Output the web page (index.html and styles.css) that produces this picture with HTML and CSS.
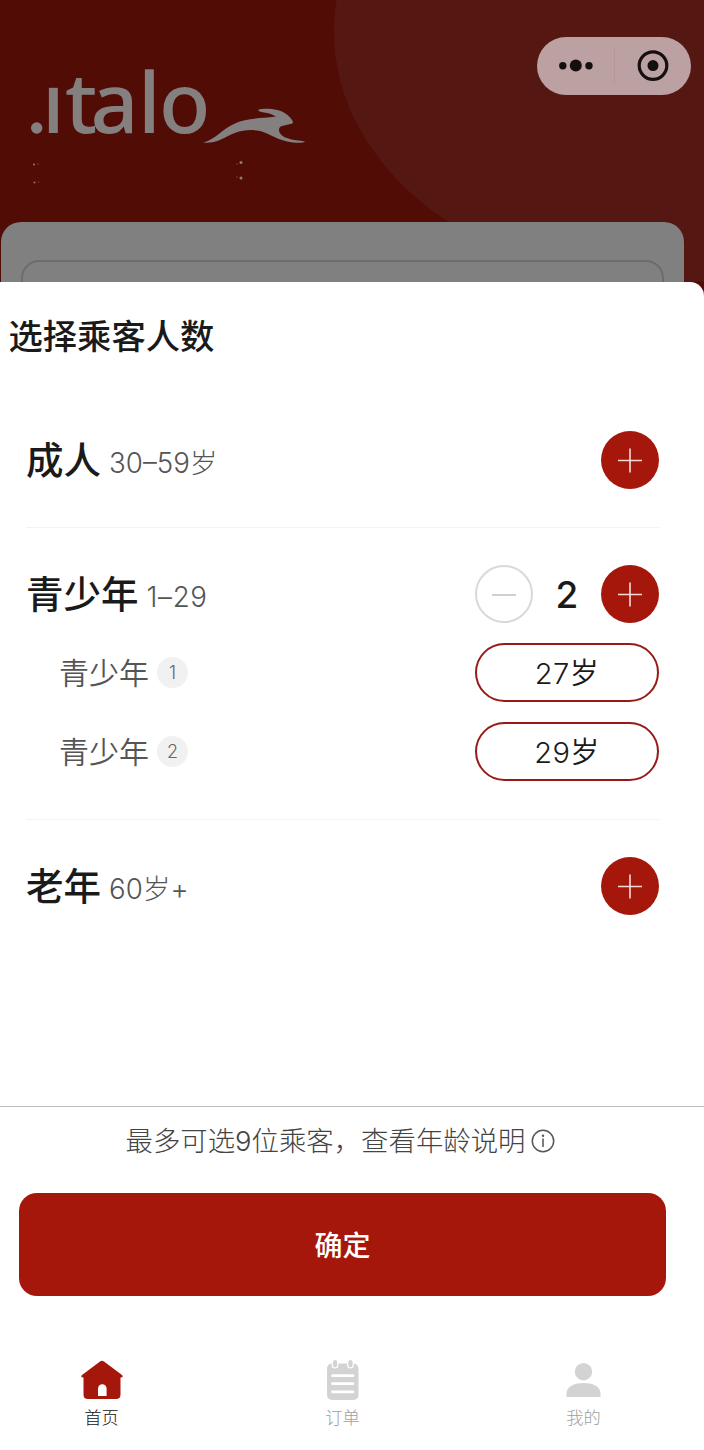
FILE: index.html
```html
<!DOCTYPE html>
<html lang="zh-CN">
<head>
<meta charset="utf-8">
<title>选择乘客人数</title>
<link rel="stylesheet" href="styles.css">
</head>
<body>
<header class="hero">
  <svg class="hero-art" viewBox="0 0 704 300" aria-hidden="true">
    <ellipse cx="664" cy="32" rx="330" ry="251" fill="#551712"/>
    <circle cx="36.700" cy="128" r="5.700" fill="#858080"/>
    <text class="wordmark" x="42 65 90.500 138 159" y="133">ıtalo</text>
    <path fill="#858080" d="M203.500 142.500C216 139 222 129 235 123.500C246 118 260 118.500 276 116.500C272 114 268 113 264 112.500C260 112 257.500 111 258.500 109.800C262 108.500 271 108.500 277 110C285 111.500 291 117 293 122C293 125 285 124 280 127C277 131 281 136 287 138C293 140.500 299 140 305 141.500C304 143.500 294 143 287 141.500C275 139 268 132 257 130.500C247 129 237 131 228 136C219 141 212 143.500 203.500 142.500Z"/>
    <g fill="#907b70"><circle cx="34" cy="164.500" r="1"/><circle cx="34.500" cy="182.500" r="1"/><circle cx="241" cy="162.500" r="1.500"/><circle cx="241" cy="178" r="1.500"/></g>
    <g fill="#6c2a22"><circle cx="38" cy="164" r="1"/><circle cx="38.500" cy="182" r="1"/><circle cx="237" cy="164" r="1"/><circle cx="237" cy="177" r="1"/></g>
  </svg>
  <div class="capsule">
    <svg width="154" height="58" viewBox="0 0 154 58"><g fill="#15100f"><circle cx="25.800" cy="28.800" r="3.700"/><circle cx="38.800" cy="28.500" r="6"/><circle cx="52" cy="28.800" r="3.700"/><circle cx="116" cy="28.600" r="5.500"/></g><circle cx="116" cy="28.600" r="13.800" fill="none" stroke="#15100f" stroke-width="3.200"/><path d="M77.500 11v36" stroke="#b39898"/></svg>
  </div>
  <div class="search-card"><div class="search-field"></div></div>
</header>

<main class="sheet">
  <h1 class="title">选择乘客人数</h1>
  <section class="group group-adult">
    <div class="row">
      <h2 class="name">成人</h2><span class="range">30–59岁</span>
      <div class="stepper"><button class="round plus"><svg viewBox="0 0 58 58"><path d="M29 17.500v24M17 29.500h24"/></svg></button></div>
    </div>
  </section>
  <section class="group group-youth">
    <div class="row">
      <h2 class="name">青少年</h2><span class="range range-wide">1–29</span>
      <div class="stepper">
        <button class="round minus"><svg viewBox="0 0 58 58"><path d="M17 30h24"/></svg></button>
        <span class="count">2</span>
        <button class="round plus"><svg viewBox="0 0 58 58"><path d="M29 17.500v24M17 29.500h24"/></svg></button>
      </div>
    </div>
    <div class="person"><span class="person-name">青少年</span><span class="badge">1</span><button class="age">27岁</button></div>
    <div class="person"><span class="person-name">青少年</span><span class="badge">2</span><button class="age">29岁</button></div>
  </section>
  <section class="group group-senior">
    <div class="row">
      <h2 class="name">老年</h2><span class="range">60岁+</span>
      <div class="stepper"><button class="round plus"><svg viewBox="0 0 58 58"><path d="M29 17.500v24M17 29.500h24"/></svg></button></div>
    </div>
  </section>
  <footer class="footer">
    <p class="hint"><span>最多可选9位乘客，查看年龄说明</span>
      <svg width="24" height="24" viewBox="0 0 24 24"><circle cx="12" cy="12" r="10.700" fill="none" stroke="#555" stroke-width="1.500"/><path d="M12 9.500v8.500" stroke="#666" stroke-width="1.700"/><circle cx="12" cy="6.700" r="1.200" fill="#555"/></svg>
    </p>
    <button class="confirm">确定</button>
  </footer>
</main>

<nav class="tabs">
  <a class="tab active">
    <svg width="42" height="40" viewBox="0 0 42 40"><path fill="#a6170b" d="M19 1.500Q21 0 23 1.500L41 15Q43 17.500 39.500 17.500V34.500Q39.500 39 35 39H7Q2.500 39 2.500 34.500V17.500Q-1 17.500 1 15Z"/><path fill="#fff" d="M17 36V28.500a4.300 4.300 0 0 1 8.600 0V36Z"/></svg>
    <span>首页</span>
  </a>
  <a class="tab">
    <svg width="32" height="40" viewBox="0 0 32 40"><rect y="3.500" width="31.500" height="36.500" rx="5" fill="#d3d3d3"/><g fill="#d3d3d3" stroke="#fff" stroke-width="1.200"><rect x="5.300" y="-.5" width="5.500" height="8.500" rx="2.700"/><rect x="20.700" y="-.5" width="5.500" height="8.500" rx="2.700"/></g><path d="M5.500 15.700h20.500M5.500 23.700h20.500M5.500 31.800h20.500" stroke="#fff" stroke-width="2.800" stroke-linecap="round"/></svg>
    <span>订单</span>
  </a>
  <a class="tab">
    <svg width="35" height="40" viewBox="0 0 35 40"><circle cx="17.500" cy="11.700" r="8.700" fill="#d3d3d3"/><path fill="#d3d3d3" d="M.5 37V33C1 26 9 23 17.500 23S34 26 34.500 33V37Z"/></svg>
    <span>我的</span>
  </a>
</nav>
</body>
</html>
```
FILE: styles.css
```css
* { box-sizing: border-box; }
body {
  margin: 0;
  width: 704px;
  height: 1450px;
  overflow: hidden;
  background: #fff;
  color: #1a1a1a;
  font-family: Inter, "Noto Sans CJK SC", sans-serif;
}
button { border: 0; padding: 0; font: inherit; color: inherit; }
svg { display: block; flex: none; }

.hero {
  position: relative;
  height: 300px;
  padding-top: 37px;
  background: #520c06;
  display: flex;
  flex-direction: column;
  overflow: hidden;
}
.hero-art { position: absolute; left: 0; top: 0; width: 704px; height: 300px; }
.wordmark { font: 500 84px "Noto Sans", "Open Sans", sans-serif; fill: #858080; }
.capsule {
  position: relative;
  align-self: flex-end;
  width: 154px;
  height: 58px;
  margin-right: 13px;
  border-radius: 29px;
  background: #bba1a1;
}
.search-card {
  position: relative;
  width: 683px;
  height: 100px;
  margin: 127px 0 0 1px;
  padding: 38px 20px 0 19.500px;
  border-radius: 20px 20px 0 0;
  background: #808080;
  flex: none;
}
.search-field { height: 60px; border: 2px solid #6c6c6c; border-radius: 18px; }

.sheet {
  position: relative;
  height: 1046px;
  margin-top: -18px;
  padding-top: 31px;
  border-radius: 0 14px 0 0;
  background: #fff;
}
.title { margin: 0 0 0 8.500px; font-size: 34.300px; line-height: 48px; font-weight: 500; }
.group { margin: 0 45px 0 26px; border-bottom: 1px solid #f3f3f3; }
.group-adult { padding-top: 70px; height: 167px; }
.group-youth { padding-top: 37px; height: 292px; }
.group-senior { padding-top: 37px; height: 286px; border: 0; }
.row { display: flex; align-items: center; height: 58px; }
.name { margin: 1px 0 0; font-size: 37.500px; line-height: 54px; font-weight: 500; }
.range { margin: 5px 0 0 8px; font-size: 27.700px; line-height: 40px; font-weight: 300; color: #555; }
.range-wide { letter-spacing: .7px; }
.stepper { margin-left: auto; display: flex; align-items: center; }
.round { width: 58px; height: 58px; border-radius: 50%; background: none; }
.round svg { width: 58px; height: 58px; fill: none; stroke-width: 1.600; }
.plus { background: #a6170b; }
.plus svg { stroke: #f7dcd9; }
.minus { border: 2px solid #d9d9d9; }
.minus svg { margin: -2px; stroke: #d0d0d0; stroke-width: 2; }
.count { width: 68px; text-align: center; font-size: 37px; font-weight: 450; }
.person { display: flex; align-items: center; height: 59px; margin: 20px 0 0 33px; }
.person-name { font-size: 30px; line-height: 44px; font-weight: 350; color: #555; }
.badge {
  width: 31px;
  height: 31px;
  margin-left: 8px;
  border-radius: 50%;
  background: #f1f1f1;
  font-size: 18px;
  line-height: 31px;
  font-weight: 300;
  text-align: center;
  color: #666;
}
.age {
  width: 184px;
  height: 59px;
  margin-left: auto;
  padding-bottom: 3px;
  border: 2px solid #971a17;
  border-radius: 30px;
  background: #fff;
  font-size: 29px;
  font-weight: 350;
  letter-spacing: .5px;
}

.footer { height: 222px; padding: 12px 38px 0 19px; border-top: 1px solid #bcbcbc; }
.hint {
  display: flex;
  align-items: center;
  justify-content: center;
  gap: 6px;
  height: 42px;
  margin: 0 4px 32px 0;
  font-size: 27.400px;
  font-weight: 300;
  color: #444;
  white-space: nowrap;
}
.hint span { margin-top: -2px; }
.hint svg { margin-top: 2px; }
.confirm {
  display: block;
  width: 647px;
  height: 103px;
  padding-bottom: 2px;
  border-radius: 18px;
  background: #a6170b;
  color: #fff;
  font-size: 28px;
  font-weight: 500;
}

.tabs { display: flex; height: 122px; margin: 0 -19px; padding-top: 32px; }
.tab {
  display: flex;
  flex: none;
  flex-direction: column;
  align-items: center;
  gap: 6px;
  width: 241px;
  font-size: 17.300px;
  line-height: 24px;
  font-weight: 300;
  color: #a0a0a0;
}
.active { color: #111; }
```
